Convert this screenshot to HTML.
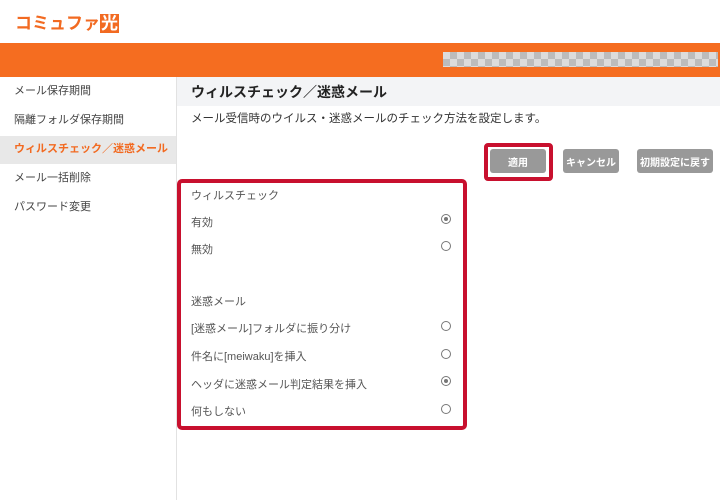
<!DOCTYPE html><html><head><meta charset="utf-8"><style>
body{margin:0;width:720px;height:500px;position:relative;background:#fff;font-family:"Liberation Sans","Noto Sans CJK JP",sans-serif;overflow:hidden;color:#444}
.a{position:absolute;white-space:nowrap}
.t{font-size:11px;color:#555;line-height:14px}
.r{position:absolute;left:441px;width:8px;height:8px;border:1.5px solid #777;border-radius:50%}
.r.on::after{content:"";position:absolute;left:2px;top:2px;width:4px;height:4px;border-radius:50%;background:#777}
.btn{position:absolute;background:#999;color:#fff;font-size:10px;font-weight:bold;border-radius:3px;display:flex;align-items:center;justify-content:center;height:24px;top:149px}
</style></head><body>
<div class="a" style="left:15px;top:9px;font-size:17px;font-weight:bold;color:#f26a21">コミュファ<span style="background:#f26a21;color:#fff;padding:0 1px">光</span></div>
<div class="a" style="left:0;top:43px;width:720px;height:34px;background:#f56d20"></div>
<div class="a" style="left:443px;top:52px;width:275px;height:15px;background:repeating-conic-gradient(#bcbcbc 0 25%,#dcdcdc 0 50%) 0 0/14px 14px"></div>
<div class="a" style="left:176px;top:77px;width:1px;height:423px;background:#e2e2e2"></div>
<div class="a" style="left:177px;top:77px;width:543px;height:29px;background:#f3f4f6"></div>
<div class="a" style="left:191px;top:82px;font-size:14px;font-weight:bold;color:#222">ウィルスチェック／迷惑メール</div>
<div class="a t" style="left:191px;top:112px;font-size:11.5px;color:#333">メール受信時のウイルス・迷惑メールのチェック方法を設定します。</div>
<div class="a t" style="left:14px;top:84px;color:#444">メール保存期間</div>
<div class="a t" style="left:14px;top:113px;color:#444">隔離フォルダ保存期間</div>
<div class="a" style="left:0;top:136px;width:176px;height:28px;background:#e8e8e8"></div>
<div class="a t" style="left:14px;top:142px;color:#f26a21;font-weight:bold">ウィルスチェック／迷惑メール</div>
<div class="a t" style="left:14px;top:171px;color:#444">メール一括削除</div>
<div class="a t" style="left:14px;top:200px;color:#444">パスワード変更</div>
<div class="a" style="left:484px;top:143px;width:61px;height:30px;border:4px solid #c8102e;border-radius:4px"></div>
<div class="btn" style="left:490px;width:56px">適用</div>
<div class="btn" style="left:563px;width:56px">キャンセル</div>
<div class="btn" style="left:637px;width:76px">初期設定に戻す</div>
<div class="a" style="left:177px;top:179px;width:282px;height:243px;border:4px solid #c8102e;border-radius:5px"></div>
<div class="a t" style="left:191px;top:189px">ウィルスチェック</div>
<div class="a t" style="left:191px;top:216px">有効</div><div class="r on" style="top:214px"></div>
<div class="a t" style="left:191px;top:243px">無効</div><div class="r" style="top:241px"></div>
<div class="a t" style="left:191px;top:295px">迷惑メール</div>
<div class="a t" style="left:191px;top:322px">[迷惑メール]フォルダに振り分け</div><div class="r" style="top:321px"></div>
<div class="a t" style="left:191px;top:350px">件名に[meiwaku]を挿入</div><div class="r" style="top:349px"></div>
<div class="a t" style="left:191px;top:378px">ヘッダに迷惑メール判定結果を挿入</div><div class="r on" style="top:376px"></div>
<div class="a t" style="left:191px;top:405px">何もしない</div><div class="r" style="top:404px"></div>
</body></html>
